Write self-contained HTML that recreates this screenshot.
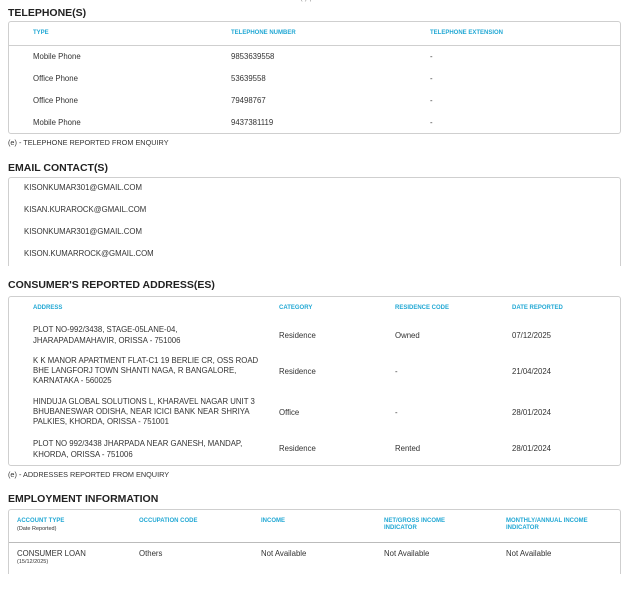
<!DOCTYPE html>
<html><head><style>
body{margin:0;width:628px;height:611px;background:#fff;position:relative;overflow:hidden;font-family:"Liberation Sans",sans-serif;color:#333}
div{position:absolute;white-space:nowrap}
.h{font-size:10.5px;font-weight:bold;color:#222;left:8px}
.box{border:1px solid #cfcfcf;border-radius:3px}
.nb{border-bottom:none;border-radius:3px 3px 0 0}
.c{font-size:6px;font-weight:bold;color:#22a8d4}
.t{font-size:7.8px;line-height:11px}
.f{font-size:7.3px;left:8px}
.ln{height:1px;background:#cfcfcf}
</style></head><body>
<div class="t" style="left:300px;top:-8px;color:#999">( ) |</div>
<div class="h" style="top:7px">TELEPHONE(S)</div>
<div class="box" style="left:8px;top:21px;width:611px;height:111px"></div>
<div class="ln" style="left:9px;top:45px;width:611px"></div>
<div class="c" style="left:33px;top:30px">TYPE</div>
<div class="c" style="left:231px;top:30px">TELEPHONE NUMBER</div>
<div class="c" style="left:430px;top:30px">TELEPHONE EXTENSION</div>
<div class="t" style="left:33px;top:51px">Mobile Phone</div><div class="t" style="left:231px;top:51px">9853639558</div><div class="t" style="left:430px;top:51px">-</div>
<div class="t" style="left:33px;top:73px">Office Phone</div><div class="t" style="left:231px;top:73px">53639558</div><div class="t" style="left:430px;top:73px">-</div>
<div class="t" style="left:33px;top:95px">Office Phone</div><div class="t" style="left:231px;top:95px">79498767</div><div class="t" style="left:430px;top:95px">-</div>
<div class="t" style="left:33px;top:117px">Mobile Phone</div><div class="t" style="left:231px;top:117px">9437381119</div><div class="t" style="left:430px;top:117px">-</div>
<div class="f" style="top:138px">(e) - TELEPHONE REPORTED FROM ENQUIRY</div>

<div class="h" style="top:162px">EMAIL CONTACT(S)</div>
<div class="box nb" style="left:8px;top:177px;width:611px;height:88px"></div>
<div class="t" style="left:24px;top:182px">KISONKUMAR301@GMAIL.COM</div>
<div class="t" style="left:24px;top:204px">KISAN.KURAROCK@GMAIL.COM</div>
<div class="t" style="left:24px;top:226px">KISONKUMAR301@GMAIL.COM</div>
<div class="t" style="left:24px;top:248px">KISON.KUMARROCK@GMAIL.COM</div>

<div class="h" style="top:279px">CONSUMER'S REPORTED ADDRESS(ES)</div>
<div class="box" style="left:8px;top:296px;width:611px;height:168px"></div>
<div class="c" style="left:33px;top:305px">ADDRESS</div>
<div class="c" style="left:279px;top:305px">CATEGORY</div>
<div class="c" style="left:395px;top:305px">RESIDENCE CODE</div>
<div class="c" style="left:512px;top:305px">DATE REPORTED</div>
<div class="t" style="left:33px;top:324px">PLOT NO-992/3438, STAGE-05LANE-04,<br>JHARAPADAMAHAVIR, ORISSA - 751006</div>
<div class="t" style="left:279px;top:330px">Residence</div><div class="t" style="left:395px;top:330px">Owned</div><div class="t" style="left:512px;top:330px">07/12/2025</div>
<div class="t" style="left:33px;top:356px;line-height:10px">K K MANOR APARTMENT FLAT-C1 19 BERLIE CR, OSS ROAD<br>BHE LANGFORJ TOWN SHANTI NAGA, R BANGALORE,<br>KARNATAKA - 560025</div>
<div class="t" style="left:279px;top:366px">Residence</div><div class="t" style="left:395px;top:366px">-</div><div class="t" style="left:512px;top:366px">21/04/2024</div>
<div class="t" style="left:33px;top:397px;line-height:10px">HINDUJA GLOBAL SOLUTIONS L, KHARAVEL NAGAR UNIT 3<br>BHUBANESWAR ODISHA, NEAR ICICI BANK NEAR SHRIYA<br>PALKIES, KHORDA, ORISSA - 751001</div>
<div class="t" style="left:279px;top:407px">Office</div><div class="t" style="left:395px;top:407px">-</div><div class="t" style="left:512px;top:407px">28/01/2024</div>
<div class="t" style="left:33px;top:438px">PLOT NO 992/3438 JHARPADA NEAR GANESH, MANDAP,<br>KHORDA, ORISSA - 751006</div>
<div class="t" style="left:279px;top:443px">Residence</div><div class="t" style="left:395px;top:443px">Rented</div><div class="t" style="left:512px;top:443px">28/01/2024</div>
<div class="f" style="top:470px">(e) - ADDRESSES REPORTED FROM ENQUIRY</div>

<div class="h" style="top:493px">EMPLOYMENT INFORMATION</div>
<div class="box nb" style="left:8px;top:509px;width:611px;height:64px"></div>
<div class="ln" style="left:9px;top:542px;width:611px;background:#bbb"></div>
<div class="c" style="left:17px;top:518px">ACCOUNT TYPE</div>
<div style="left:17px;top:526px;font-size:5.5px;color:#333">(Date Reported)</div>
<div class="c" style="left:139px;top:518px">OCCUPATION CODE</div>
<div class="c" style="left:261px;top:518px">INCOME</div>
<div class="c" style="left:384px;top:518px;line-height:7px">NET/GROSS INCOME<br>INDICATOR</div>
<div class="c" style="left:506px;top:518px;line-height:7px">MONTHLY/ANNUAL INCOME<br>INDICATOR</div>
<div class="t" style="left:17px;top:548px">CONSUMER LOAN</div>
<div style="left:17px;top:559px;font-size:5.5px;color:#333">(15/12/2025)</div>
<div class="t" style="left:139px;top:548px">Others</div>
<div class="t" style="left:261px;top:548px">Not Available</div>
<div class="t" style="left:384px;top:548px">Not Available</div>
<div class="t" style="left:506px;top:548px">Not Available</div>
</body></html>
